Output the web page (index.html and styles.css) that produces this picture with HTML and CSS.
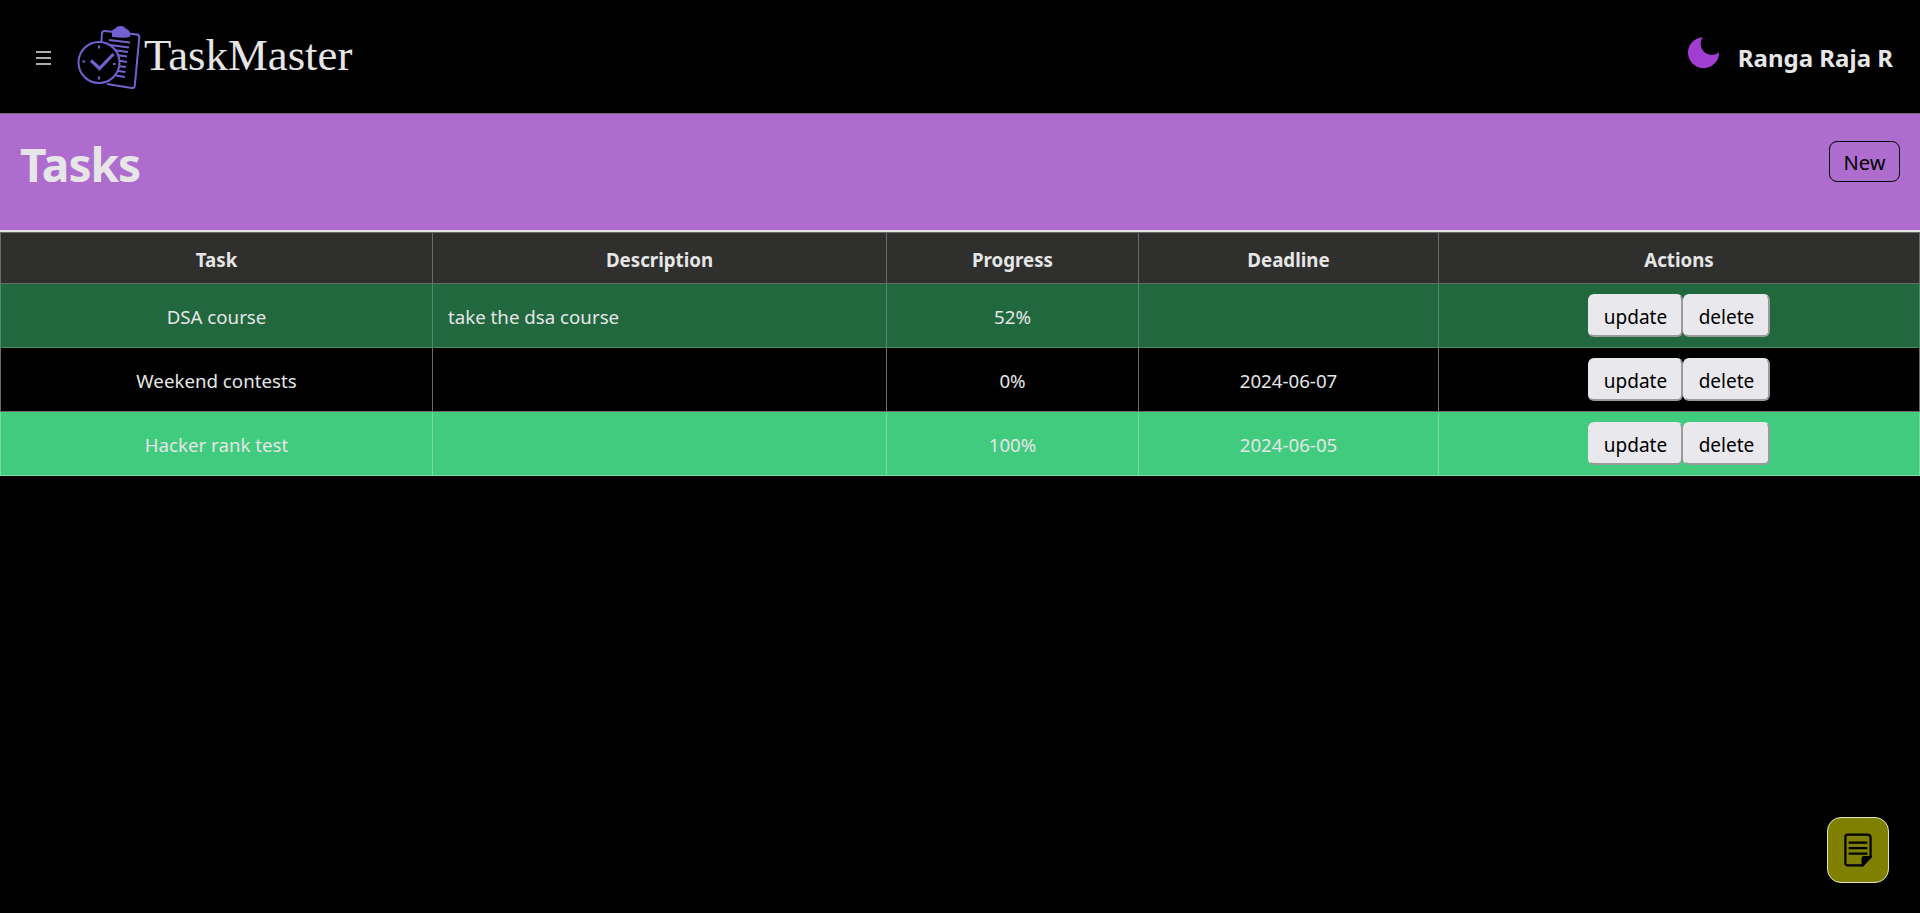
FILE: index.html
```html
<!DOCTYPE html>
<html lang="en">
  <head>
    <meta charset="UTF-8" />
    <meta name="viewport" content="width=device-width, initial-scale=1.0" />
    <title>TaskMaster</title>
    <link rel="stylesheet" href="styles.css">
  </head>
  <body>
    <header class="navbar">
      <div class="nav-left">
        <button class="menu-toggle" aria-label="Menu">
          <svg width="15" height="14" viewBox="0 0 15 14"><path d="M0 1h15M0 7h15M0 13h15" stroke="#e6e6e6" stroke-width="1.4"/></svg>
        </button>
        <svg class="logo" width="66" height="66" viewBox="76 25 66 66" fill="none" stroke="#7460cf" stroke-width="2">
          <path d="M110 50 L101 46 L102 33 Q102.5 30.7 105 31 L137 34.5 Q139.5 35 139.3 37.5 L134.8 85.5 Q134.5 88.5 131.5 88 L107 84"/>
          <path d="M113 31 Q114 29.5 116 29.5 Q117 27 120.5 27 Q124 27 125 29.5 Q128 30 129 33 L129 36 Q125 37.5 113 36 Z" fill="#7460cf"/>
          <path d="M109 40 L130 42.5 M110 45 L129 47.5 M113 50 L128 52 M116 55 L127 56.5 M118 60.5 L127 62 M118 66 L126 67 M118 71 L125.5 72 M116 75.5 L125 77"/>
          <circle cx="99" cy="62.5" r="20.5" fill="#000"/>
          <path d="M99 45.5v3M99 76.5v3M82.5 61.5h2.5M113 64h2.5"/>
          <path d="M91 60.5 L99.5 68.5 L113.5 54" stroke-width="3.2"/>
        </svg>
        <span class="brand">TaskMaster</span>
      </div>
      <div class="nav-right">
        <svg class="moon" width="31" height="31" viewBox="0 0 31 31"><path d="M14.7 0.2 A15.5 15.5 0 1 0 31 15.3 A11.2 11.2 0 0 1 14.7 0.2 Z" fill="#a13dd1"/></svg>
        <span class="username">Ranga Raja R</span>
      </div>
    </header>

    <section class="page-head">
      <h1>Tasks</h1>
      <button class="new-btn">New</button>
    </section>

    <table class="task-table">
      <colgroup>
        <col class="col-task">
        <col class="col-desc">
        <col class="col-progress">
        <col class="col-deadline">
        <col>
      </colgroup>
      <thead>
        <tr>
          <th>Task</th>
          <th>Description</th>
          <th>Progress</th>
          <th>Deadline</th>
          <th>Actions</th>
        </tr>
      </thead>
      <tbody>
        <tr class="row-started">
          <td>DSA course</td>
          <td class="desc">take the dsa course</td>
          <td>52%</td>
          <td></td>
          <td class="actions"><button class="action-btn">update</button><button class="action-btn">delete</button></td>
        </tr>
        <tr>
          <td>Weekend contests</td>
          <td class="desc"></td>
          <td>0%</td>
          <td>2024-06-07</td>
          <td class="actions"><button class="action-btn">update</button><button class="action-btn">delete</button></td>
        </tr>
        <tr class="row-done">
          <td>Hacker rank test</td>
          <td class="desc"></td>
          <td>100%</td>
          <td>2024-06-05</td>
          <td class="actions"><button class="action-btn">update</button><button class="action-btn">delete</button></td>
        </tr>
      </tbody>
    </table>

    <button class="notes-fab" aria-label="Notes">
      <svg width="28" height="34" viewBox="0 0 30 36" fill="none" stroke="#000" stroke-width="2.4">
        <path d="M4 1.5 H25 Q28.5 1.5 28.5 5 V25 L20 34.5 H4 Q1.5 34.5 1.5 32 V4 Q1.5 1.5 4 1.5 Z"/>
        <path d="M5 10h20M5 16h20M5 22h20"/>
        <path d="M20 34 V27 Q20 25.5 21.5 25.5 H28.5 Z" fill="#000"/>
      </svg>
    </button>
  </body>
</html>
```

FILE: styles.css
```css
/* Basic Reset & Body Styling */
body {
  margin: 0;
  min-height: 100vh;
  background-color: #000;
  color: #e6e6e6;
  font-family: "Noto Sans", "Open Sans", sans-serif;
}

/* Navbar */
.navbar {
  height: 113px;
  display: flex;
  justify-content: space-between;
  align-items: center;
  border-bottom: 1px solid #6d6d6d;
}

.nav-left {
  display: flex;
  align-items: center;
}

.menu-toggle {
  display: flex;
  padding: 0;
  margin: 3px 25px 0 36px;
  background: none;
  border: none;
}

.logo {
  margin-right: 2px;
  margin-top: 3px;
}

.brand {
  font-family: "Liberation Serif", serif;
  font-size: 44.8px;
  margin-top: -3px;
}

.nav-right {
  display: flex;
  align-items: center;
  padding-right: 27px;
}

.moon {
  margin: -8px 19px 0 0;
}

.username {
  font-size: 24px;
  font-weight: 700;
  margin-top: 1px;
}

/* Purple title band */
.page-head {
  height: 116px;
  display: flex;
  justify-content: space-between;
  align-items: flex-start;
  background-color: #ae6dce;
  border-bottom: 2px solid #e4e4e4;
}

.page-head h1 {
  margin: 17px 0 0 20px;
  font-size: 46px;
  font-weight: 700;
  line-height: 66px;
  letter-spacing: -1px;
}

.new-btn {
  width: 71px;
  height: 41px;
  margin: 27px 20px 0 0;
  padding: 1px 0 0;
  background: none;
  border: 1px solid #000;
  border-radius: 8px;
  color: #000;
  font: inherit;
  font-size: 20px;
}

/* Table Styling */
.task-table {
  width: 100%;
  table-layout: fixed;
  border-collapse: collapse;
  font-size: 18.7px;
}

.col-task { width: 432px; }
.col-desc { width: 454px; }
.col-progress { width: 252px; }
.col-deadline { width: 300px; }

th,
td {
  padding: 2px 0 0;
  border: 1px solid #6a6a6a;
  text-align: center;
}

th {
  height: 48px;
  background-color: #2f2f2d;
  font-weight: 700;
}

td {
  height: 61px;
}

td.desc {
  padding-left: 15px;
  text-align: left;
}

td.actions {
  padding-top: 0;
}

.row-started td {
  background-color: #21683f;
  border-color: #4f8a68;
}

.row-done td {
  background-color: #40cb7e;
  border-color: #74dba1;
}

.action-btn {
  width: 95px;
  height: 43px;
  padding: 2px 0 0;
  background-color: #e9e9ed;
  border: 2px solid #e9e9ed;
  border-right-color: #9a9a9a;
  border-bottom-color: #9a9a9a;
  border-radius: 6px;
  color: #000;
  font: inherit;
  font-size: 19px;
  vertical-align: middle;
}

.action-btn + .action-btn {
  width: 87px;
}

/* Floating notes button */
.notes-fab {
  position: fixed;
  right: 31px;
  bottom: 30px;
  width: 62px;
  height: 66px;
  display: flex;
  justify-content: center;
  align-items: center;
  padding: 0;
  background-color: #808000;
  border: 1px solid #e2e2c4;
  border-radius: 14px;
}
```
